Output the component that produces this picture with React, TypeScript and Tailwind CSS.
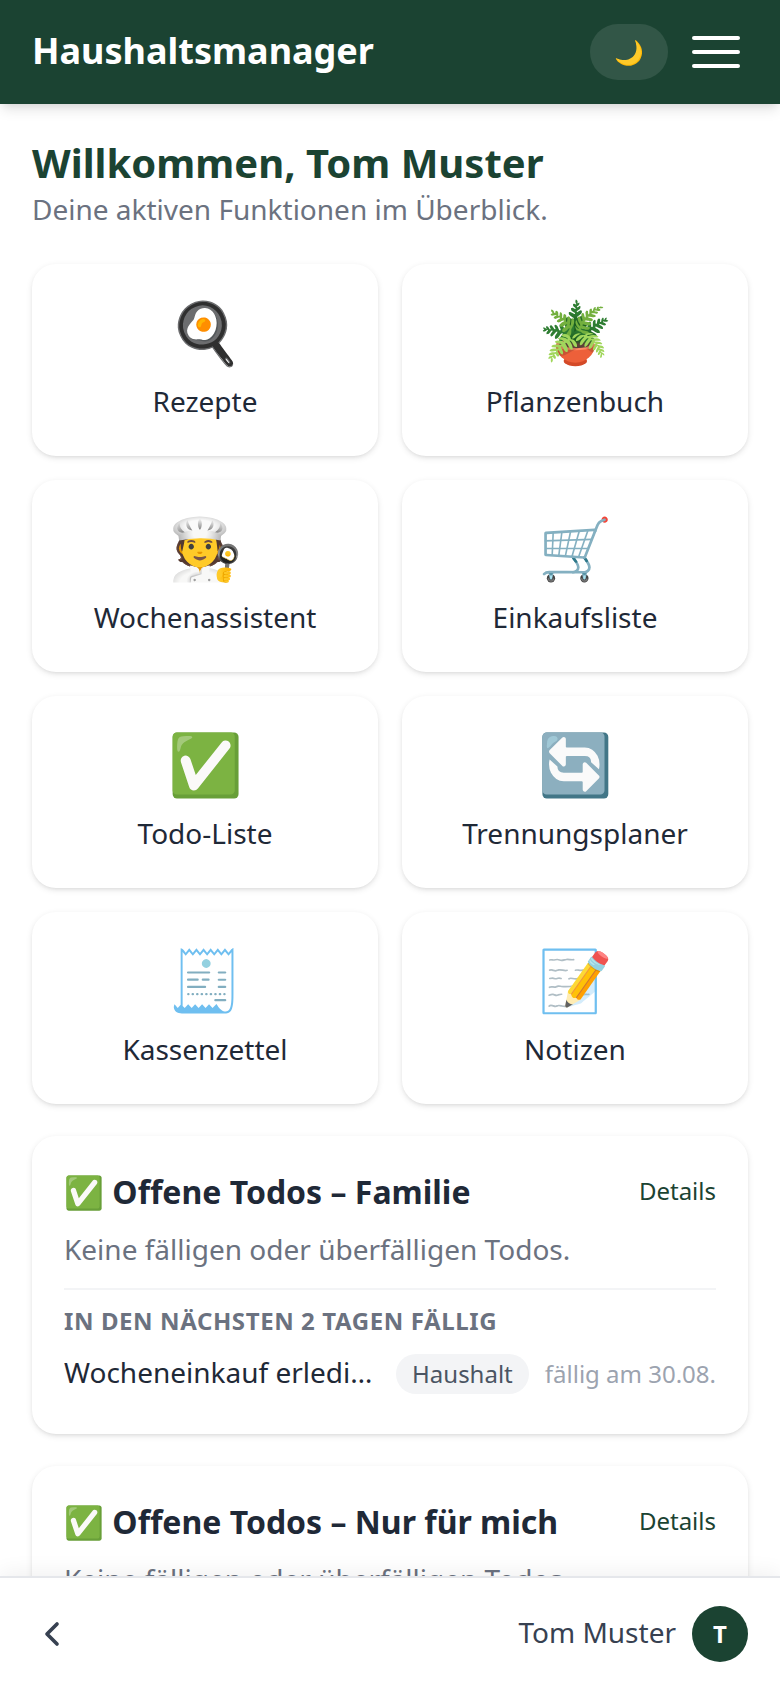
import { useState } from 'react';

const features = [
  { icon: '🍳', label: 'Rezepte' },
  { icon: '🪴', label: 'Pflanzenbuch' },
  { icon: '🧑‍🍳', label: 'Wochenassistent' },
  { icon: '🛒', label: 'Einkaufsliste' },
  { icon: '✅', label: 'Todo-Liste' },
  { icon: '🔄', label: 'Trennungsplaner' },
  { icon: '🧾', label: 'Kassenzettel' },
  { icon: '📝', label: 'Notizen' },
];

const groups = ['Familie', 'Nur für mich'];

function TodoCard({ name }: { name: string }) {
  return (
    <section className="rounded-3xl bg-white p-8 shadow-[0_2px_6px_rgba(0,0,0,0.1),0_2px_4px_-2px_rgba(0,0,0,0.1)]">
      <div className="flex items-start justify-between">
        <h2 className="text-[32px] leading-[48px] font-bold">✅ Offene Todos – {name}</h2>
        <a href="#todos" className="text-[24px] leading-[46px] text-[#1b4332]">Details</a>
      </div>
      <p className="mt-3.5 text-[28px] leading-[38px] text-[#6b7280]">Keine fälligen oder überfälligen Todos.</p>
      <div className="mt-5 border-t-2 border-[#f3f4f6] pt-4">
        <h3 className="text-[24px] leading-[30px] font-bold tracking-wide text-[#6b7280] uppercase">In den nächsten 2 Tagen fällig</h3>
        <div className="mt-4 flex items-baseline gap-4 pb-2">
          <span className="min-w-0 flex-1 truncate text-[28px] leading-10">Wocheneinkauf erledigen</span>
          <span className="rounded-full bg-[#f3f4f6] px-4 py-1 text-[24px] leading-8 text-[#4b5563]">Haushalt</span>
          <span className="text-[24px] leading-8 text-[#9ca3af]">fällig am 30.08.</span>
        </div>
      </div>
    </section>
  );
}

export default function App() {
  const [open, setOpen] = useState(false);
  return (
    <div className="flex h-screen flex-col bg-white font-['Noto_Sans',sans-serif] text-[#1f2937]">
      <header className="z-10 flex h-[104px] shrink-0 items-center justify-between bg-[#1b4332] px-8 text-white shadow-[0_8px_12px_-2px_rgba(0,0,0,0.1),0_4px_8px_-4px_rgba(0,0,0,0.1)]">
        <a href="#home" className="pb-0.5 text-[36px] leading-[56px] font-bold">Haushaltsmanager</a>
        <div className="flex items-center gap-4">
          <button aria-label="Design wechseln" className="h-14 rounded-full bg-white/10 px-6 text-[24px] leading-8">🌙</button>
          <button aria-label="Menü" aria-expanded={open} onClick={() => setOpen(!open)} className="flex flex-col gap-2.5 p-2">
            <span className="h-1 w-12 rounded bg-white" />
            <span className="h-1 w-12 rounded bg-white" />
            <span className="h-1 w-12 rounded bg-white" />
          </button>
        </div>
      </header>
      <main className="min-h-0 flex-1 overflow-hidden px-8 pt-8">
        <h1 className="text-[40px] leading-[54px] font-bold text-[#1b4332]">Willkommen, Tom Muster</h1>
        <p className="text-[28px] leading-[38px] text-[#6b7280]">Deine aktiven Funktionen im Überblick.</p>
        <nav className="mt-9 grid grid-cols-2 gap-6">
          {features.map((f) => (
            <a key={f.label} href="#funktion" className="flex min-h-48 flex-col items-center gap-4 rounded-3xl px-4 py-8 shadow-[0_2px_6px_rgba(0,0,0,0.1),0_2px_4px_-2px_rgba(0,0,0,0.1)]">
              <span className="text-[60px] leading-[70px]">{f.icon}</span>
              <span className="text-[28px] leading-[38px]">{f.label}</span>
            </a>
          ))}
        </nav>
        <div className="mt-8 flex flex-col gap-8">
          {groups.map((g) => <TodoCard key={g} name={g} />)}
        </div>
      </main>
      <footer className="z-10 flex shrink-0 items-center justify-between border-t-2 border-[#e5e7eb] bg-white px-8 pt-7 pb-[26px] shadow-[0_-4px_20px_rgba(0,0,0,0.06)]">
        <button aria-label="Zurück" className="text-[#374151]">
          <svg className="size-10" viewBox="0 0 24 24" fill="none" stroke="currentColor" strokeWidth="2.2" strokeLinecap="round" strokeLinejoin="round"><path d="m15 18-6-6 6-6" /></svg>
        </button>
        <div className="flex items-baseline gap-4">
          <span className="text-[28px] leading-[38px] text-[#374151]">Tom Muster</span>
          <span className="flex size-14 items-center justify-center rounded-full bg-[#1b4332] text-[24px] leading-8 font-bold text-white">T</span>
        </div>
      </footer>
    </div>
  );
}
